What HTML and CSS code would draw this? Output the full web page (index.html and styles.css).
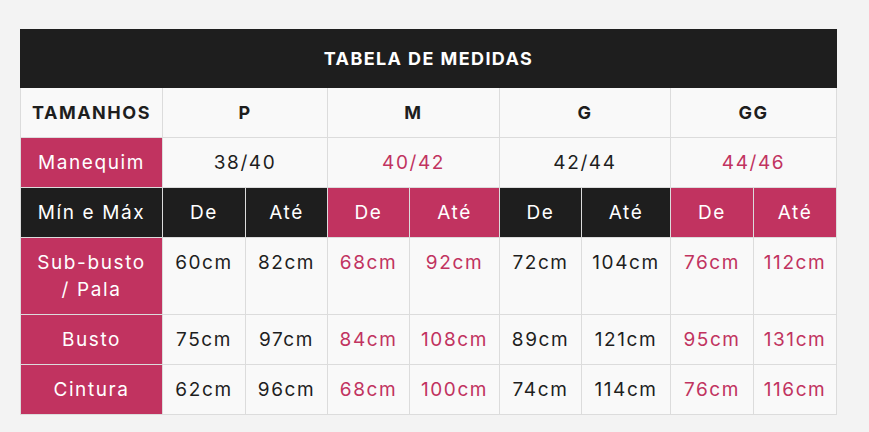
FILE: index.html
```html
<!DOCTYPE html>
<html lang="pt-BR">
<head>
<meta charset="utf-8">
<title>Tabela de Medidas</title>
<link rel="stylesheet" href="styles.css">
</head>
<body>
<div class="page">
  <table class="sizes">
    <colgroup>
      <col class="c-label">
      <col class="c83"><col class="c82">
      <col class="c82"><col class="c90">
      <col class="c82"><col class="c89">
      <col class="c83"><col class="c83">
    </colgroup>
    <thead>
      <tr><th colspan="9" class="title">TABELA DE MEDIDAS</th></tr>
    </thead>
    <tbody>
      <tr class="sizes-row">
        <th class="head-label">TAMANHOS</th>
        <th colspan="2">P</th>
        <th colspan="2">M</th>
        <th colspan="2">G</th>
        <th colspan="2">GG</th>
      </tr>
      <tr>
        <th class="pink">Manequim</th>
        <td colspan="2">38/40</td>
        <td colspan="2" class="alt">40/42</td>
        <td colspan="2">42/44</td>
        <td colspan="2" class="alt">44/46</td>
      </tr>
      <tr>
        <th class="dark">Mín e Máx</th>
        <td class="dark">De</td><td class="dark">Até</td>
        <td class="pink">De</td><td class="pink">Até</td>
        <td class="dark">De</td><td class="dark">Até</td>
        <td class="pink">De</td><td class="pink">Até</td>
      </tr>
      <tr>
        <th class="pink">Sub-busto<br>/ Pala</th>
        <td>60cm</td><td>82cm</td>
        <td class="alt">68cm</td><td class="alt">92cm</td>
        <td>72cm</td><td>104cm</td>
        <td class="alt">76cm</td><td class="alt">112cm</td>
      </tr>
      <tr>
        <th class="pink">Busto</th>
        <td>75cm</td><td>97cm</td>
        <td class="alt">84cm</td><td class="alt">108cm</td>
        <td>89cm</td><td>121cm</td>
        <td class="alt">95cm</td><td class="alt">131cm</td>
      </tr>
      <tr>
        <th class="pink">Cintura</th>
        <td>62cm</td><td>96cm</td>
        <td class="alt">68cm</td><td class="alt">100cm</td>
        <td>74cm</td><td>114cm</td>
        <td class="alt">76cm</td><td class="alt">116cm</td>
      </tr>
    </tbody>
  </table>
</div>
</body>
</html>
```

FILE: styles.css
```css
html, body {
  margin: 0;
  padding: 0;
  background: #f3f3f3;
}

.page {
  padding: 29px 0 0 20px;
}

.sizes {
  border-collapse: collapse;
  table-layout: fixed;
  width: 817px;
  font-family: Inter, "DejaVu Sans", sans-serif;
  font-size: 19px;
  line-height: 27px;
  letter-spacing: 1.6px;
  color: #1e1e1e;
  background: #f9f9f9;
}

.c-label { width: 142px; }
.c82 { width: 82px; }
.c83 { width: 83px; }
.c89 { width: 89px; }
.c90 { width: 90px; }

.sizes th,
.sizes td {
  border: 1px solid #dcdcdc;
  padding: 11px 0;
  text-align: center;
  vertical-align: top;
  font-weight: 400;
}

.sizes .title {
  background: #1e1e1e;
  color: #fff;
  font-weight: 700;
  font-size: 18px;
  letter-spacing: 1.4px;
  padding: 15px 0;
  border-color: #1e1e1e;
}

.sizes-row th {
  font-weight: 700;
  font-size: 18px;
  letter-spacing: 1.5px;
  color: #1e1e1e;
}

.sizes .pink {
  background: #c13360;
  color: #fff;
}

.sizes .dark {
  background: #1e1e1e;
  color: #fff;
}

.sizes .alt {
  color: #c13360;
}
```
